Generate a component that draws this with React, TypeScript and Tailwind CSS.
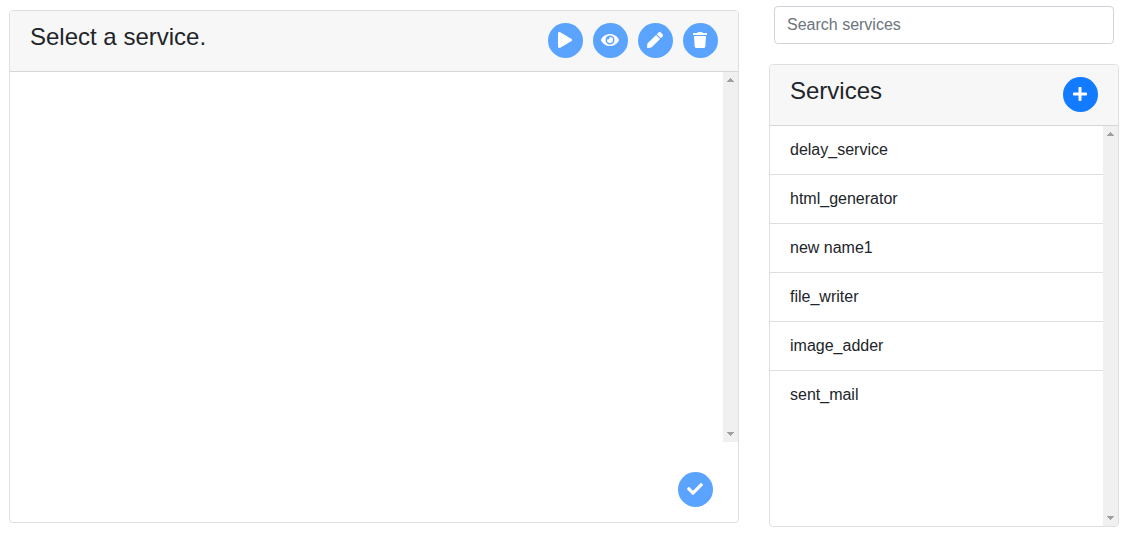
import type { ReactNode } from "react";
import { FaCheck, FaEye, FaPen, FaPlay, FaPlus, FaTrash } from "react-icons/fa";

const services = [
  "delay_service",
  "html_generator",
  "new name1",
  "file_writer",
  "image_adder",
  "sent_mail",
];

type RoundButtonProps = {
  label: string;
  disabled?: boolean;
  children: ReactNode;
};

function RoundButton({ label, disabled, children }: RoundButtonProps) {
  return (
    <button
      type="button"
      aria-label={label}
      disabled={disabled}
      className="flex size-[35px] shrink-0 items-center justify-center rounded-full bg-[#127bff] pr-px pb-px text-base text-white disabled:bg-[#5aa4ff]"
    >
      {children}
    </button>
  );
}

function ScrollTrack() {
  return (
    <div aria-hidden="true" className="flex w-[15px] shrink-0 flex-col items-center justify-between bg-[#f0f0f0] py-1.5 text-[#a0a0a0]">
      <svg width="7" height="4" viewBox="0 0 7 4" fill="currentColor" shapeRendering="crispEdges">
        <path d="M3 0h1v1h1v1h1v1h1v1H0V3h1V2h1V1h1z" />
      </svg>
      <svg width="7" height="4" viewBox="0 0 7 4" fill="currentColor" shapeRendering="crispEdges">
        <path d="M0 0h7v1H6v1H5v1H4v1H3V3H2V2H1V1H0z" />
      </svg>
    </div>
  );
}

function CardHeader({ title, children }: { title: string; children: ReactNode }) {
  return (
    <header className="flex items-start justify-between border-b border-[#d6d6d6] bg-[#f7f7f7] px-5 py-3">
      <h2 className="text-2xl leading-7">{title}</h2>
      <div className="flex gap-2.5 pb-px">{children}</div>
    </header>
  );
}

export default function App() {
  return (
    <div className="flex items-start gap-[30px] px-[9px] font-['Liberation_Sans',Arial,sans-serif] text-base text-[#212529]">
      <main className="mt-2.5 min-w-0 flex-1 overflow-hidden rounded border border-[#dfdfdf] bg-white">
        <CardHeader title="Select a service.">
          <RoundButton label="Run service" disabled><FaPlay /></RoundButton>
          <RoundButton label="View service" disabled><FaEye className="h-4 w-[18px]" /></RoundButton>
          <RoundButton label="Edit service" disabled><FaPen /></RoundButton>
          <RoundButton label="Delete service" disabled><FaTrash /></RoundButton>
        </CardHeader>
        <div className="flex min-h-[370px]">
          <div className="flex-1" />
          <ScrollTrack />
        </div>
        <footer className="flex justify-end pt-[30px] pr-[25px] pb-[15px]">
          <RoundButton label="Confirm" disabled><FaCheck /></RoundButton>
        </footer>
      </main>

      <aside className="w-[350px] shrink-0 pt-1.5">
        <div className="px-[5px]">
          <input
            type="text"
            aria-label="Search services"
            placeholder="Search services"
            className="block w-full rounded border border-[#ced4da] bg-white px-3 py-1.5 leading-6 placeholder:text-[#6c757d]"
          />
        </div>
        <section className="mt-5 overflow-hidden rounded border border-[#dfdfdf] bg-white">
          <CardHeader title="Services">
            <RoundButton label="Add service"><FaPlus /></RoundButton>
          </CardHeader>
          <div className="flex min-h-[400px]">
            <ul className="flex-1 divide-y divide-[#dfdfdf]">
              {services.map((name) => (
                <li key={name} className="px-5 py-3 leading-6">{name}</li>
              ))}
            </ul>
            <ScrollTrack />
          </div>
        </section>
      </aside>
    </div>
  );
}
